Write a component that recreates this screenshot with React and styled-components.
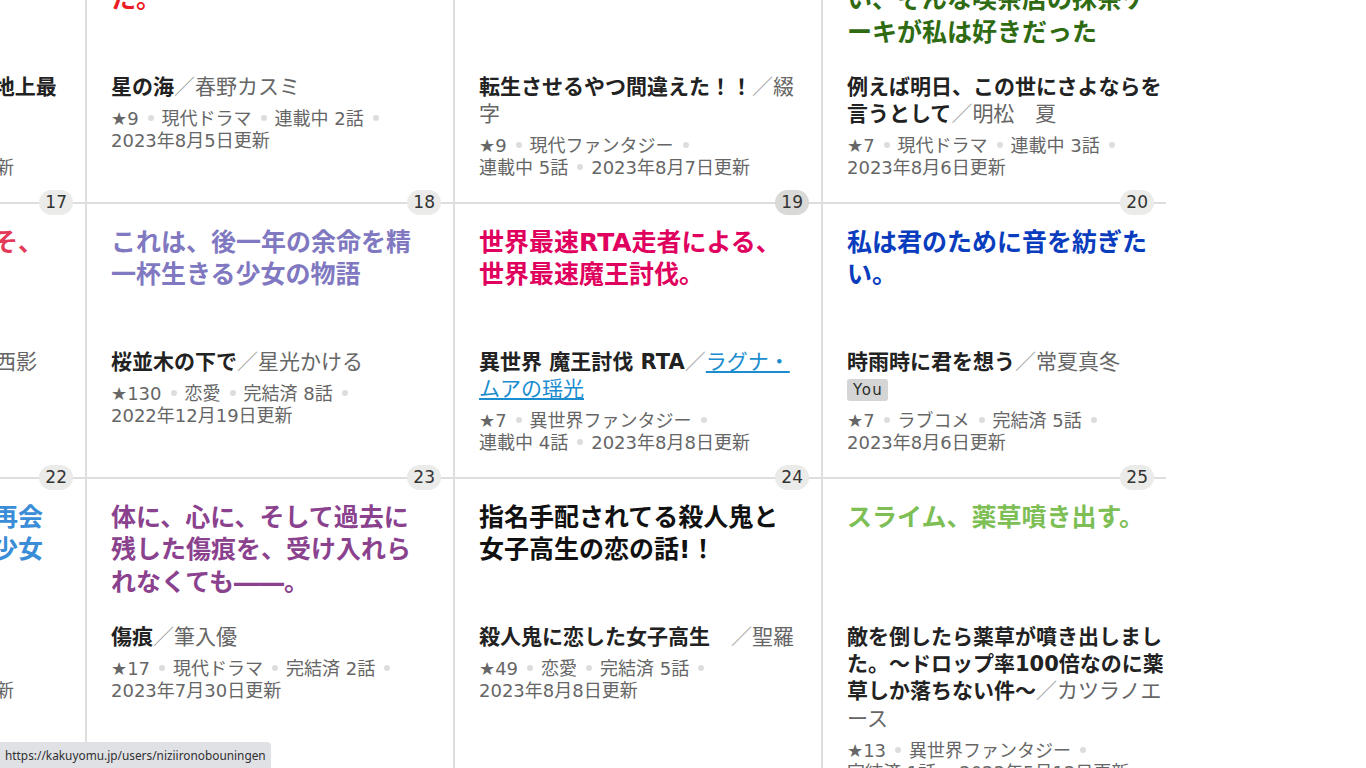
import React from "react";
import styled, { createGlobalStyle } from "styled-components";

const GlobalStyle = createGlobalStyle`
  html, body {
    margin: 0;
    padding: 0;
    background: #ffffff;
    overflow: hidden;
  }
  body {
    font-family: "DejaVu Sans", "Noto Sans CJK JP", sans-serif;
    color: #222;
  }
`;

const Viewport = styled.main`
  width: 1366px;
  height: 768px;
  overflow: hidden;
  position: relative;
`;

const Calendar = styled.div`
  margin: -73px 0 0 -281px;
  width: 1447px;
`;

const Week = styled.section`
  display: grid;
  grid-template-columns: repeat(3, 368px) 343px;
  border-top: 2px solid #dedede;
`;

const Day = styled.article`
  position: relative;
  min-width: 0;
  padding: 22.5px ${(p) => (p.$last ? "0" : "24px")} 23px 24px;
  border-right: ${(p) => (p.$last ? "none" : "2px solid #dedede")};
`;

const DateBadge = styled.span`
  position: absolute;
  top: -14px;
  right: 12px;
  height: 25px;
  padding: 0 6px;
  border-radius: 13px;
  background: ${(p) => (p.$today ? "#d9d9d7" : "#ebebe9")};
  color: #333;
  font-size: 17px;
  line-height: 25px;
`;

const Catch = styled.p`
  margin: 0 0 24.5px;
  min-height: 97.5px;
  font-size: 25px;
  font-weight: 700;
  line-height: 32.5px;
  color: ${(p) => p.$color};
`;

const WorkTitle = styled.h3`
  margin: 0;
  font-size: 21px;
  font-weight: 400;
  line-height: 27.3px;
  color: #666;
`;

const TitleText = styled.strong`
  font-weight: 700;
  color: #222;
`;

const Slash = styled.span`
  color: #9a9a9a;
`;

const AuthorLink = styled.a`
  color: #1b8dcf;
  text-decoration: underline;
`;

const BadgeLine = styled.div`
  display: flex;
  align-items: center;
  height: 27.3px;
`;

const YouBadge = styled.span`
  display: inline-block;
  height: 22px;
  padding: 0 5px 0 6px;
  border-radius: 3px;
  background: #d5d5d5;
  color: #2a2a2a;
  font-size: 15px;
  line-height: 22px;
  letter-spacing: 1.5px;
`;

const Meta = styled.ul`
  display: flex;
  flex-wrap: wrap;
  margin: 7px 0 0;
  padding: 0;
  list-style: none;
  font-size: 18px;
  line-height: 22px;
  color: #666;
`;

const MetaItem = styled.li`
  white-space: nowrap;
  &:not(:last-child)::after {
    content: "";
    display: inline-block;
    width: 6px;
    height: 6px;
    margin: 0 8px 0 9px;
    border-radius: 50%;
    background: #dddddd;
    vertical-align: 4px;
  }
`;

const StatusBubble = styled.div`
  position: fixed;
  left: 0;
  bottom: 0;
  height: 26px;
  padding: 0 5px 0 5px;
  border-top-right-radius: 4px;
  background: #dfe1e5;
  color: #303030;
  font-family: "Noto Sans", Roboto, sans-serif;
  font-size: 11.85px;
  line-height: 26px;
`;

const weeks = [
  [
    {
      date: 11,
      catch: "最強の力で無双する！",
      color: "#c0392b",
      title: "パーティを追放された俺は地上最強",
      author: "灰塚",
      meta: ["★5", "異世界ファンタジー", "連載中 3話", "2023年8月3日更新"],
    },
    {
      date: 12,
      catch: "僕らは、星の海を泳いでいた。",
      color: "#ec1c24",
      title: "星の海",
      author: "春野カスミ",
      meta: ["★9", "現代ドラマ", "連載中 2話", "2023年8月5日更新"],
    },
    {
      date: 13,
      catch: "神様、転生先を間違える。",
      color: "#333333",
      title: "転生させるやつ間違えた！！",
      author: "綴字",
      meta: ["★9", "現代ファンタジー", "連載中 5話", "2023年8月7日更新"],
    },
    {
      date: 14,
      catch:
        "街角の小さな、静かで温かい、そんな喫茶店の抹茶ケーキが私は好きだった",
      color: "#2f6b12",
      title: "例えば明日、この世にさよならを言うとして",
      author: "明松　夏",
      meta: ["★7", "現代ドラマ", "連載中 3話", "2023年8月6日更新"],
    },
  ],
  [
    {
      date: 17,
      catch: "二度目の人生、今度こそ、君を幸せにする。",
      color: "#e23a58",
      title: "やり直し人生を君と共に",
      author: "西影",
      meta: ["★3", "恋愛", "完結済 10話", "2023年8月2日更新"],
    },
    {
      date: 18,
      catch: "これは、後一年の余命を精一杯生きる少女の物語",
      color: "#8078c0",
      title: "桜並木の下で",
      author: "星光かける",
      meta: ["★130", "恋愛", "完結済 8話", "2022年12月19日更新"],
    },
    {
      date: 19,
      today: true,
      catch: "世界最速RTA走者による、世界最速魔王討伐。",
      color: "#e0005e",
      title: "異世界 魔王討伐 RTA",
      author: "ラグナ・ムアの瑶光",
      authorLink: true,
      meta: ["★7", "異世界ファンタジー", "連載中 4話", "2023年8月8日更新"],
    },
    {
      date: 20,
      catch: "私は君のために音を紡ぎたい。",
      color: "#0a3cbe",
      title: "時雨時に君を想う",
      author: "常夏真冬",
      you: true,
      meta: ["★7", "ラブコメ", "完結済 5話", "2023年8月6日更新"],
    },
  ],
  [
    {
      date: 22,
      catch: "夏祭りの夜、幼馴染と再会した、記憶をなくした少女との物語。",
      color: "#3a8dd6",
      title: "夏の終わりの再会",
      author: "青葉",
      meta: ["★8", "現代ファンタジー", "連載中 3話", "2023年8月3日更新"],
    },
    {
      date: 23,
      catch: "体に、心に、そして過去に残した傷痕を、受け入れられなくても――。",
      color: "#8b428e",
      title: "傷痕",
      author: "筆入優",
      meta: ["★17", "現代ドラマ", "完結済 2話", "2023年7月30日更新"],
    },
    {
      date: 24,
      catch: "指名手配されてる殺人鬼と女子高生の恋の話!！",
      color: "#111111",
      title: "殺人鬼に恋した女子高生　",
      author: "聖羅",
      meta: ["★49", "恋愛", "完結済 5話", "2023年8月8日更新"],
    },
    {
      date: 25,
      catch: "スライム、薬草噴き出す。",
      color: "#7dbe55",
      title:
        "敵を倒したら薬草が噴き出しました。〜ドロップ率100倍なのに薬草しか落ちない件〜",
      author: "カツラノエース",
      meta: ["★13", "異世界ファンタジー", "完結済 1話", "2023年5月12日更新"],
    },
  ],
];

function DayCell({ day, last }) {
  return (
    <Day $last={last}>
      <DateBadge $today={day.today}>{day.date}</DateBadge>
      <Catch $color={day.color}>{day.catch}</Catch>
      <WorkTitle>
        <TitleText>{day.title}</TitleText>
        <Slash>／</Slash>
        {day.authorLink ? (
          <AuthorLink href="#">{day.author}</AuthorLink>
        ) : (
          <span>{day.author}</span>
        )}
      </WorkTitle>
      {day.you && (
        <BadgeLine>
          <YouBadge>You</YouBadge>
        </BadgeLine>
      )}
      <Meta>
        {day.meta.map((m, i) => (
          <MetaItem key={i}>{m}</MetaItem>
        ))}
      </Meta>
    </Day>
  );
}

export default function App() {
  return (
    <>
      <GlobalStyle />
      <Viewport>
        <Calendar>
          {weeks.map((week, wi) => (
            <Week key={wi}>
              {week.map((day, di) => (
                <DayCell key={day.date} day={day} last={di === week.length - 1} />
              ))}
            </Week>
          ))}
        </Calendar>
        <StatusBubble>https://kakuyomu.jp/users/niziironobouningen</StatusBubble>
      </Viewport>
    </>
  );
}
